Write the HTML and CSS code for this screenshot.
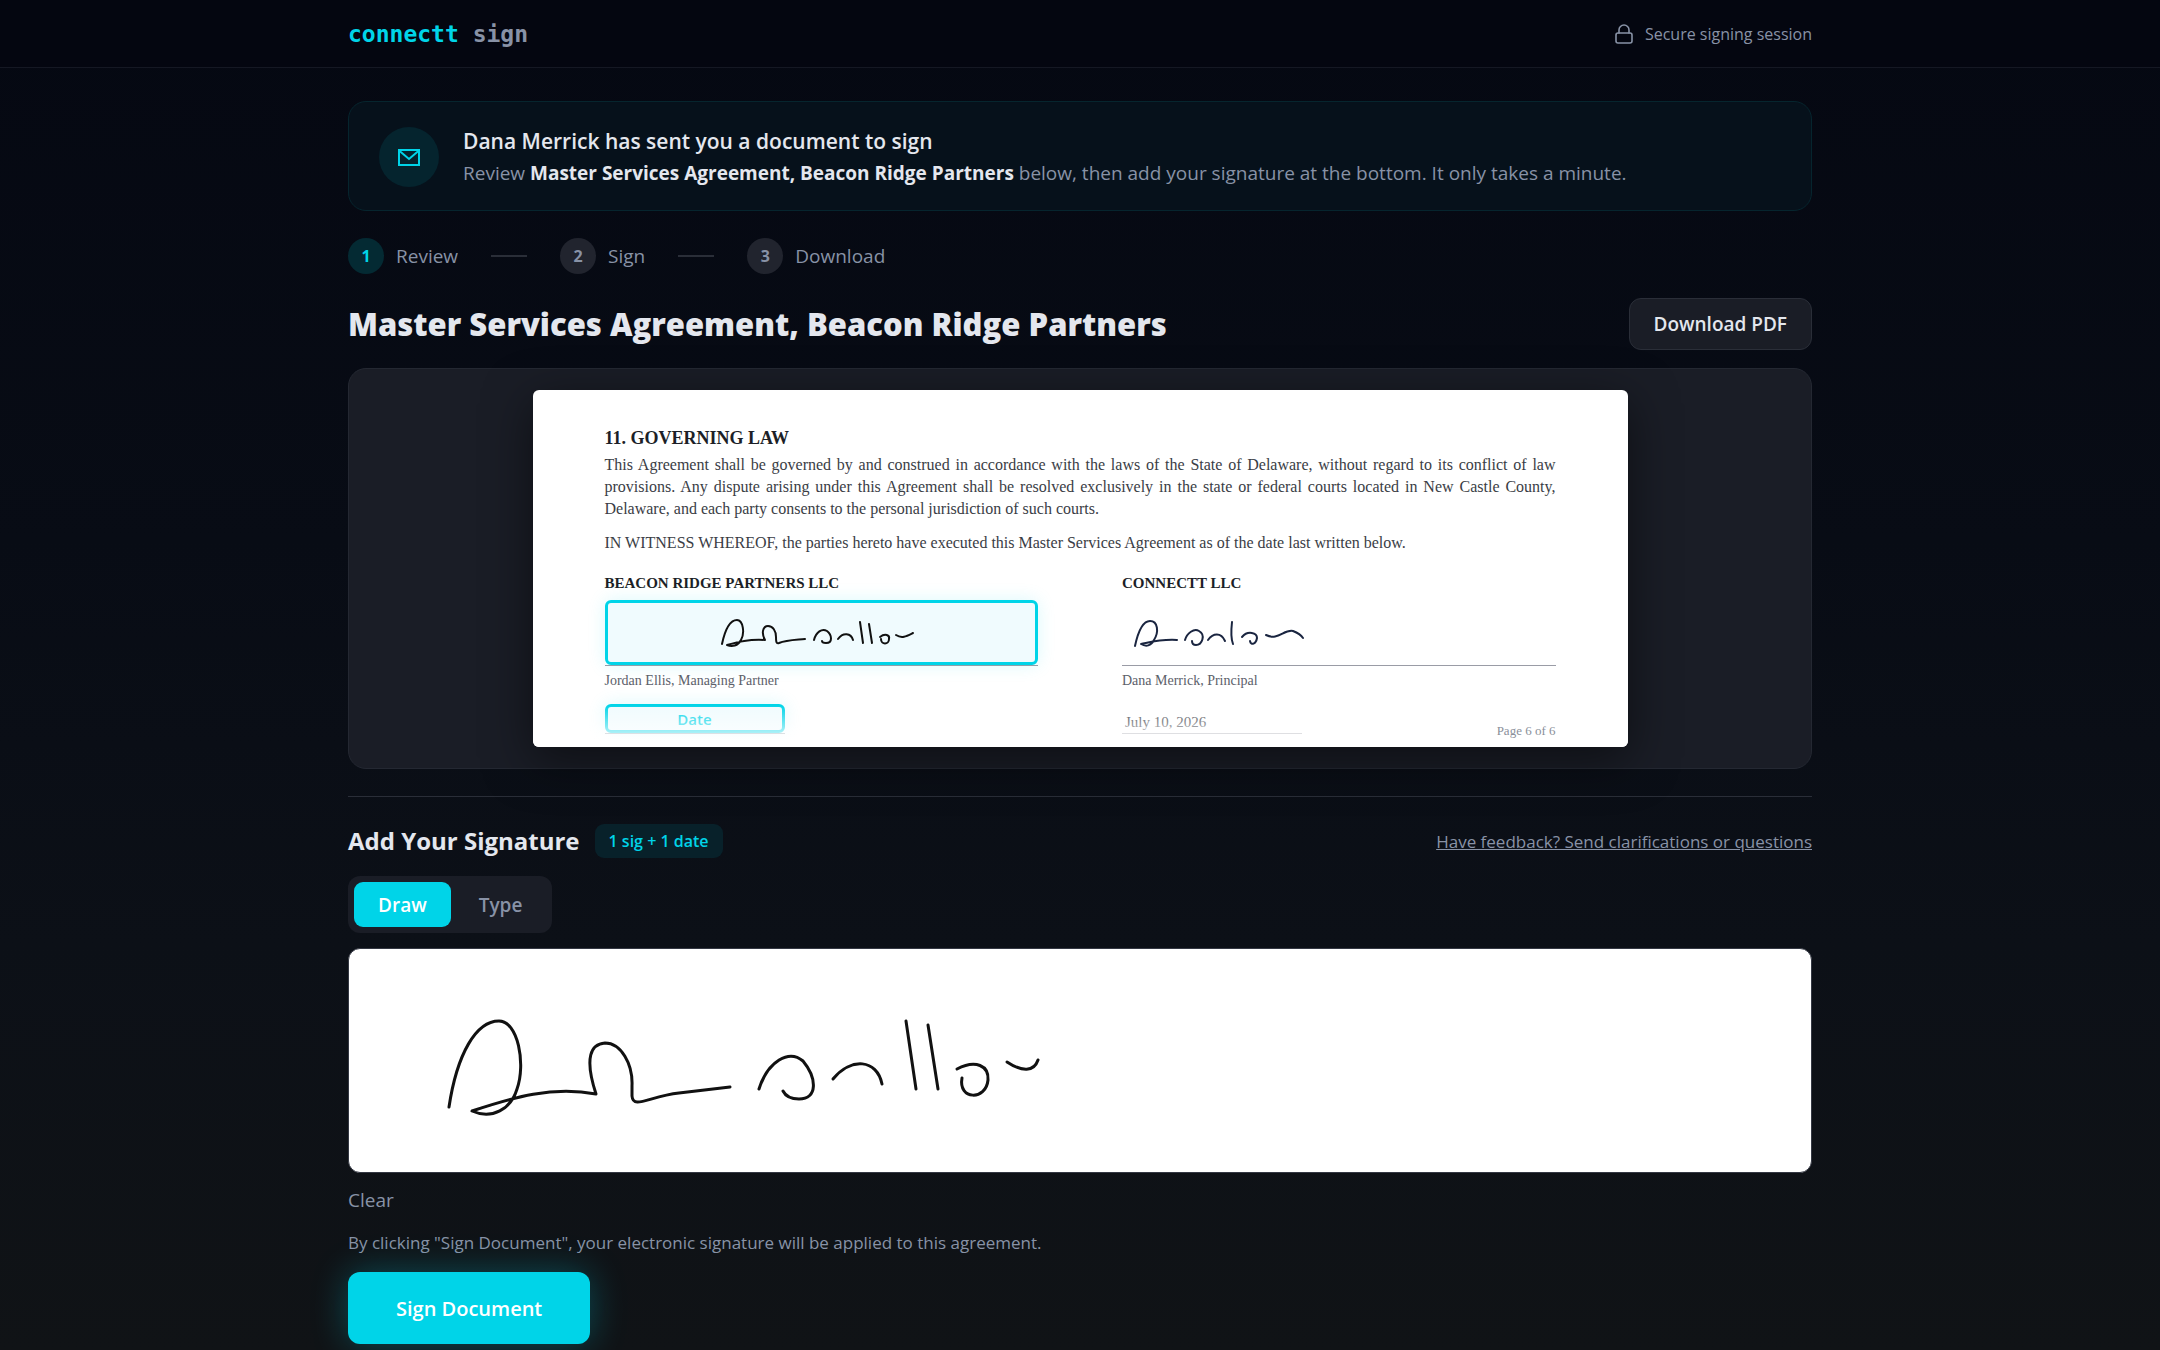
FILE: index.html
```html
<!DOCTYPE html>
<html lang="en">
<head>
<meta charset="utf-8">
<meta name="viewport" content="width=device-width, initial-scale=1">
<title>Master Services Agreement, Beacon Ridge Partners</title>
<link rel="stylesheet" href="styles.css">
</head>
<body>
<header class="topbar">
  <div class="wrap topbar-inner">
    <div class="brand"><span class="brand-name">connectt</span> sign</div>
    <div class="secure">
      <svg class="lock" viewBox="0 0 22 22" aria-hidden="true"><rect x="3" y="10" width="16" height="10" rx="2"/><path d="M6 10V7a5 5 0 0 1 10 0V10"/></svg>
      <span>Secure signing session</span>
    </div>
  </div>
</header>

<main class="wrap">
  <section class="notice">
    <div class="notice-icon">
      <svg viewBox="0 0 24 24" aria-hidden="true"><rect x="2" y="5" width="20" height="15"/><path d="M2 5.500l10 8.500 10-8.500"/></svg>
    </div>
    <div>
      <h2 class="notice-title">Dana Merrick has sent you a document to sign</h2>
      <p class="notice-text">Review <strong>Master Services Agreement, Beacon Ridge Partners</strong> below, then add your signature at the bottom. It only takes a minute.</p>
    </div>
  </section>

  <ol class="steps">
    <li class="step step-current"><span class="step-num">1</span>Review</li>
    <li class="step"><span class="step-num">2</span>Sign</li>
    <li class="step"><span class="step-num">3</span>Download</li>
  </ol>

  <div class="title-row">
    <h1 class="title">Master Services Agreement, Beacon Ridge Partners</h1>
    <button class="btn-secondary" type="button">Download PDF</button>
  </div>

  <section class="viewer">
    <article class="paper">
      <h3 class="clause-title">11. GOVERNING LAW</h3>
      <p class="clause">This Agreement shall be governed by and construed in accordance with the laws of the State of Delaware, without regard to its conflict of law provisions. Any dispute arising under this Agreement shall be resolved exclusively in the state or federal courts located in New Castle County, Delaware, and each party consents to the personal jurisdiction of such courts.</p>
      <p class="clause">IN WITNESS WHEREOF, the parties hereto have executed this Master Services Agreement as of the date last written below.</p>
      <div class="parties">
        <div class="party">
          <h4 class="party-name">BEACON RIDGE PARTNERS LLC</h4>
          <div class="sig-line">
            <button class="field field-sig" type="button" aria-label="Your signature">
              <svg class="sig-small" viewBox="0 0 202 30" aria-hidden="true">
                <path d="M2 26C5 12 10 2 17 2C23 2 25 15 21 22C18 28 12 29 7 27C18 24 29 21 45 22C41 15 43 8 48 8C53 8 56 13 56 19C56 23 56 26 59 25C66 22 74 22 85 21"/>
                <path d="M94 22C96 14 102 10 107 13C112 17 113 25 106 25C103 25 102 24 102 23"/>
                <path d="M118 21C123 14 131 15 133 22"/>
                <path d="M140 4L143 25"/>
                <path d="M149 6L152 25"/>
                <path d="M160 19C165 15 170 17 169 21C169 27 161 27 161 21"/>
                <path d="M176 17C182 21 187 18 193 15"/>
              </svg>
            </button>
          </div>
          <p class="signer">Jordan Ellis, Managing Partner</p>
          <div class="date-line"><button class="field field-date" type="button">Date</button></div>
        </div>
        <div class="party">
          <h4 class="party-name">CONNECTT LLC</h4>
          <div class="sig-line">
            <svg class="sig-other" viewBox="0 0 180 40" aria-hidden="true">
              <path d="M2 33C5 19 10 8 17 8C25 8 26 19 21 27C18 33 13 34 8 31C18 29 28 26 44 27"/>
              <path d="M52 27C54 20 61 15 66 18C73 22 69 32 63 32C60 32 59 30 59 28"/>
              <path d="M75 27C80 20 88 19 92 28"/>
              <path d="M99 9C98 18 98 26 100 31"/>
              <path d="M109 24C115 17 124 20 124 25C123 31 118 33 117 28"/>
              <path d="M133 22C145 28 151 16 160 18C165 20 168 22 170 25"/>
            </svg>
          </div>
          <p class="signer">Dana Merrick, Principal</p>
          <div class="date-line"><span class="date-value">July 10, 2026</span></div>
        </div>
      </div>
      <div class="fade"></div>
      <p class="page-num">Page 6 of 6</p>
    </article>
  </section>

  <section class="signing">
    <div class="signing-head">
      <div class="signing-title">
        <h2>Add Your Signature</h2>
        <span class="badge">1 sig + 1 date</span>
      </div>
      <a class="feedback" href="#feedback">Have feedback? Send clarifications or questions</a>
    </div>
    <div class="modes">
      <button class="mode mode-active" type="button" aria-pressed="true">Draw</button>
      <button class="mode" type="button" aria-pressed="false">Type</button>
    </div>
    <div class="pad">
      <svg class="sig-large" viewBox="0 0 600 100" role="img" aria-label="Drawn signature">
        <path d="M5 89C13 36 32 3 55 3C74 3 82 46 73 71C67 91 48 102 28 93C70 79 108 68 152 76C140 39 147 26 161 25C177 25 189 46 188 68V78C189 92 206 78 235 75L286 69"/>
        <path d="M315 71C324 43 345 31 359 43C373 60 374 81 355 81C345 81 341 77 339 73"/>
        <path d="M389 61C407 39 433 41 438 66"/>
        <path d="M462 3L472 71"/>
        <path d="M484 7L494 71"/>
        <path d="M513 51C532 41 545 48 544 62C542 83 514 82 518 60"/>
        <path d="M563 44C578 54 590 54 594 42"/>
      </svg>
    </div>
    <button class="clear" type="button">Clear</button>
    <p class="consent">By clicking "Sign Document", your electronic signature will be applied to this agreement.</p>
    <button class="btn-primary" type="button">Sign Document</button>
  </section>
</main>
</body>
</html>
```
FILE: styles.css
```css
:root {
  --cyan: #00d4e8;
  --text: #e4e7ee;
  --muted: #8892a6;
  --panel: #1a1d26;
  --line: #2a2e38;
}
* { box-sizing: border-box; }
body {
  margin: 0;
  min-height: 100vh;
  background: linear-gradient(180deg, #050812 0%, #080c15 40%, #0c1017 70%, #101316 100%);
  color: var(--text);
  font-family: "Segoe UI", "Open Sans", sans-serif;
  font-size: 19px;
}
h1, h2, h3, h4, p, ol { margin: 0; padding: 0; }
button { font: inherit; cursor: pointer; }
svg { display: block; fill: none; stroke: currentColor; stroke-linecap: round; stroke-linejoin: round; }

.wrap { width: 100%; max-width: 1512px; margin: 0 auto; padding: 0 24px; }

.topbar { background: #040610; border-bottom: 1px solid #151823; }
.topbar-inner { display: flex; align-items: center; justify-content: space-between; height: 67px; }
.brand { font-family: "DejaVu Sans Mono", monospace; font-weight: 700; font-size: 23px; color: var(--muted); }
.brand-name { color: var(--cyan); }
.secure { display: flex; align-items: center; gap: 10px; font-size: 16px; color: var(--muted); }
.lock { width: 22px; height: 22px; stroke-width: 1.6; }

.notice {
  display: flex; align-items: center; gap: 24px;
  margin-top: 33px; padding: 23px 30px 21px;
  border: 1px solid #06252e; border-radius: 18px; background: #06111b;
}
.notice-icon {
  display: flex; align-items: center; justify-content: center; flex: none;
  width: 60px; height: 60px; border-radius: 50%;
  background: #05242e; color: var(--cyan);
}
.notice-icon svg { width: 24px; height: 24px; stroke-width: 2; stroke-linejoin: miter; }
.notice-title { font-size: 21px; line-height: 32px; font-weight: 600; }
.notice-text { font-size: 19px; line-height: 32px; color: var(--muted); }
.notice-text strong { color: var(--text); font-weight: 700; }

.steps { display: flex; gap: 33px; margin-top: 27px; list-style: none; color: var(--muted); }
.step { display: flex; align-items: center; gap: 12px; font-size: 19px; line-height: 36px; }
.step + .step::before { content: ""; width: 36px; height: 2px; margin-right: 21px; background: var(--line); }
.step-num {
  display: flex; align-items: center; justify-content: center;
  width: 36px; height: 36px; border-radius: 50%;
  background: #21242e; font-size: 16px; font-weight: 700;
}
.step-current .step-num { background: #042a33; color: var(--cyan); }

.title-row { display: flex; align-items: center; justify-content: space-between; gap: 24px; margin-top: 24px; }
.title { font-size: 31px; line-height: 44px; font-weight: 800; }
.btn-secondary {
  height: 52px; padding: 0 24px;
  border: 1px solid var(--line); border-radius: 12px;
  background: var(--panel); color: var(--text); font-weight: 600;
}

.viewer { margin-top: 18px; padding: 21px; border: 1px solid #242832; border-radius: 18px; background: var(--panel); }
.paper {
  position: relative; overflow: hidden;
  max-width: 1095px; margin: 0 auto; padding: 36px 72px 13px;
  border-radius: 6px; background: #fff; color: #3a3d45;
  box-shadow: 0 12px 48px rgba(0, 0, 0, .5);
  font-family: Georgia, "Liberation Serif", serif; font-size: 16px; line-height: 22px;
}
.clause-title { font-size: 18px; line-height: 24px; color: #1c1f27; }
.clause { margin-top: 4px; text-align: justify; }
.clause + .clause { margin-top: 12px; }
.parties { display: grid; grid-template-columns: 1fr 1fr; gap: 84px; margin-top: 18px; }
.party-name { font-size: 15px; line-height: 22px; color: #1c1f27; }
.sig-line { display: flex; align-items: center; height: 66px; margin-top: 6px; border-bottom: 1px solid #9a9ca6; }
.signer { margin-top: 5px; font-size: 14px; line-height: 20px; color: #5c606a; }
.field {
  display: flex; align-items: center; justify-content: center;
  width: 100%; height: 100%; padding: 0;
  border: 3px solid var(--cyan); border-radius: 6px;
  background: #f0fbfe; color: #111; box-shadow: 0 0 18px rgba(0, 212, 232, .15);
}
.field-date { font-family: "Segoe UI", "Open Sans", sans-serif; font-size: 15px; line-height: 20px; font-weight: 600; color: var(--cyan); }
.sig-small { width: 202px; height: 30px; stroke-width: 2; }
.sig-other { width: 180px; height: 40px; margin-left: 11px; stroke-width: 2; color: #1a2540; }
.date-line { display: flex; align-items: center; width: 180px; height: 30px; margin-top: 13px; border-bottom: 1px solid #9a9ca6; }
.date-value { padding: 6px 3px 0; font-size: 15px; line-height: 20px; }
.fade { position: absolute; inset: auto 0 0; height: 42px; background: linear-gradient(180deg, rgba(255, 255, 255, 0), #fff); }
.page-num { position: absolute; right: 72px; bottom: 6px; font-size: 13px; line-height: 20px; color: #8a8f9a; }

.signing { margin-top: 27px; padding-bottom: 6px; border-top: 1px solid var(--line); }
.signing-head { display: flex; align-items: center; justify-content: space-between; margin-top: 27px; }
.signing-title { display: flex; align-items: center; gap: 15px; }
.signing-title h2 { font-size: 24px; line-height: 34px; font-weight: 700; }
.badge { padding: 0 14px; border-radius: 9px; background: #08212a; color: var(--cyan); font-size: 16px; line-height: 34px; font-weight: 600; }
.feedback { font-size: 17px; color: var(--muted); }
.modes { display: inline-flex; gap: 4px; margin-top: 18px; padding: 6px; border-radius: 12px; background: var(--panel); }
.mode { height: 45px; padding: 0 24px; border: 0; border-radius: 9px; background: none; color: var(--muted); font-weight: 600; }
.mode-active { background: var(--cyan); color: #fff; }
.pad { height: 225px; margin-top: 15px; padding: 69px 24px 0 95px; border: 1px solid #343843; border-radius: 12px; background: #fff; color: #111; }
.sig-large { width: 600px; height: 100px; stroke-width: 3; }
.clear { display: block; margin-top: 12px; padding: 0; border: 0; background: none; color: var(--muted); line-height: 30px; }
.consent { margin-top: 15px; font-size: 17px; line-height: 26px; color: var(--muted); }
.btn-primary {
  height: 72px; margin-top: 16px; padding: 0 48px; border: 0; border-radius: 12px;
  background: var(--cyan); color: #fff; font-size: 20px; font-weight: 600;
  box-shadow: 0 0 36px rgba(0, 212, 232, .3);
}
```
